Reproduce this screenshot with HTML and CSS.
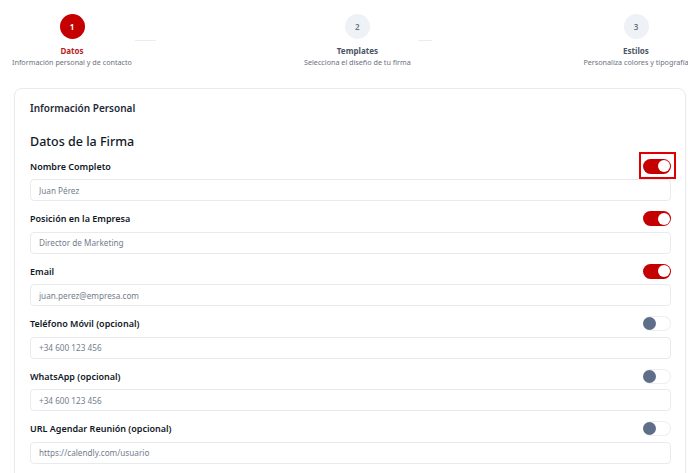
FILE: index.html
```html
<!DOCTYPE html>
<html lang="es">
<head>
    <meta charset="UTF-8">
    <meta name="viewport" content="width=device-width, initial-scale=1.0">
    <title>Generador de Firma</title>
    <link rel="stylesheet" href="styles.css">
</head>
<body>
    <div class="steps">
        <div class="step step-active step-one">
            <div class="step-circle">1</div>
            <div class="step-title">Datos</div>
            <div class="step-text">Información personal y de contacto</div>
        </div>
        <div class="step-line line-one"></div>
        <div class="step step-two">
            <div class="step-circle">2</div>
            <div class="step-title">Templates</div>
            <div class="step-text">Selecciona el diseño de tu firma</div>
        </div>
        <div class="step-line line-two"></div>
        <div class="step step-three">
            <div class="step-circle">3</div>
            <div class="step-title">Estilos</div>
            <div class="step-text">Personaliza colores y tipografía</div>
        </div>
    </div>

    <div class="card">
        <h3 class="card-title">Información Personal</h3>
        <h2 class="section-title">Datos de la Firma</h2>

        <div class="field">
            <div class="field-head">
                <label>Nombre Completo</label>
                <span class="toggle on highlight"></span>
            </div>
            <input type="text" placeholder="Juan Pérez">
        </div>

        <div class="field">
            <div class="field-head">
                <label>Posición en la Empresa</label>
                <span class="toggle on"></span>
            </div>
            <input type="text" placeholder="Director de Marketing">
        </div>

        <div class="field">
            <div class="field-head">
                <label>Email</label>
                <span class="toggle on"></span>
            </div>
            <input type="text" placeholder="juan.perez@empresa.com">
        </div>

        <div class="field">
            <div class="field-head">
                <label>Teléfono Móvil (opcional)</label>
                <span class="toggle"></span>
            </div>
            <input type="text" placeholder="+34 600 123 456">
        </div>

        <div class="field">
            <div class="field-head">
                <label>WhatsApp (opcional)</label>
                <span class="toggle"></span>
            </div>
            <input type="text" placeholder="+34 600 123 456">
        </div>

        <div class="field">
            <div class="field-head">
                <label>URL Agendar Reunión (opcional)</label>
                <span class="toggle"></span>
            </div>
            <input type="text" placeholder="https://calendly.com/usuario">
        </div>
    </div>
</body>
</html>
```

FILE: styles.css
```css
body {
    margin: 0;
    padding: 0;
    font-family: "Noto Sans", "Open Sans", sans-serif;
    background: #fff;
    color: #1f2937;
    overflow: hidden;
}

/* pasos */
.steps {
    display: flex;
    align-items: flex-start;
    padding: 14px 0 0 13px;
    white-space: nowrap;
}

.step {
    display: flex;
    flex-direction: column;
    align-items: center;
}

.step-one { width: 118px; }
.step-two { width: 106px; margin-left: 148px; }
.step-three { width: 104px; margin-left: 152px; }

.step-circle {
    width: 25px;
    height: 25px;
    border-radius: 50%;
    background: #eef1f6;
    color: #6b7280;
    font-size: 8px;
    font-weight: 600;
    display: flex;
    align-items: center;
    justify-content: center;
}

.step-title {
    margin-top: 5.5px;
    font-size: 8px;
    line-height: 11px;
    font-weight: 700;
    color: #4b5563;
}

.step-text {
    margin-top: 1.5px;
    font-size: 7.2px;
    line-height: 10px;
    color: #6b7280;
}

.step-active .step-circle {
    background: #c40000;
    color: #fff;
    font-weight: 700;
}

.step-active .step-title {
    color: #b91c1c;
}

.step-line {
    height: 1px;
    background: #ececec;
    margin-top: 26px;
}

.line-one { width: 22px; margin-left: 4px; }
.line-two { width: 14px; margin-left: 8px; }

/* tarjeta */
.card {
    margin: 21px 2px 0 14px;
    border: 1px solid #e8eaee;
    border-radius: 8px;
    padding: 12px 14px 20px 15px;
    box-shadow: 0 1px 2px rgba(0, 0, 0, 0.03);
}

.card-title {
    margin: 0;
    font-size: 10px;
    line-height: 14px;
    font-weight: 600;
    color: #1f2937;
}

.section-title {
    margin: 18px 0 0;
    font-size: 12.5px;
    line-height: 17px;
    font-weight: 500;
    color: #111827;
}

.field {
    margin-top: 10px;
}

.section-title + .field {
    margin-top: 8.5px;
}

.field-head {
    display: flex;
    justify-content: space-between;
    align-items: center;
    height: 15px;
}

.field-head label {
    font-size: 9px;
    font-weight: 600;
    color: #111827;
}

.field input {
    display: block;
    box-sizing: border-box;
    width: 100%;
    height: 22px;
    margin-top: 5.5px;
    padding: 0 8px;
    border: 1px solid #e8eaee;
    border-radius: 4px;
    font-family: inherit;
    font-size: 8.2px;
    color: #374151;
    background: #fff;
}

.field input::placeholder {
    color: #747d8c;
}

/* interruptores */
.toggle {
    position: relative;
    width: 28px;
    height: 15px;
    border-radius: 8px;
    background: #fff;
    box-shadow: inset 0 0 0 1px #eceef2;
    box-sizing: border-box;
}

.toggle::before {
    content: "";
    position: absolute;
    top: 1px;
    left: 0;
    width: 13px;
    height: 13px;
    border-radius: 50%;
    background: #5e6e89;
}

.toggle.on {
    background: #c40000;
    box-shadow: none;
}

.toggle.on::before {
    left: 14.5px;
    top: 1.5px;
    width: 12px;
    height: 12px;
    background: #fff;
}

.toggle.highlight::after {
    content: "";
    position: absolute;
    top: -7px;
    left: -4px;
    right: -5px;
    bottom: -5px;
    border: 2px solid #e10000;
}
```
